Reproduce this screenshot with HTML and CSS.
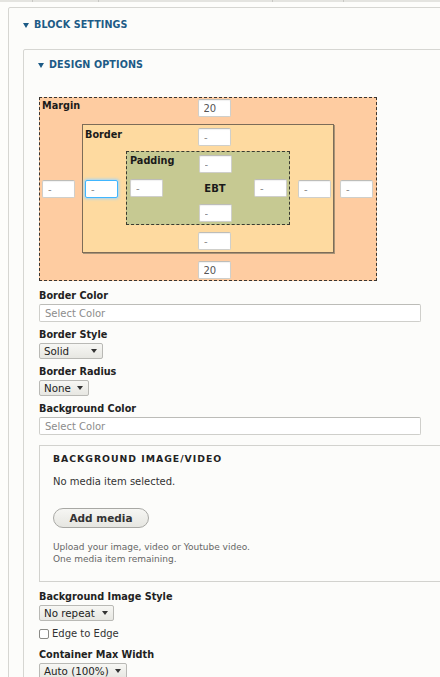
FILE: index.html
```html
<!DOCTYPE html>
<html lang="en">
<head>
<meta charset="utf-8">
<title>Block settings</title>
<link rel="stylesheet" href="styles.css">
</head>
<body>
<div class="topstrip"><span class="ts ts1"></span><span class="ts ts2"></span><span class="ts ts3"></span><span class="ts ts4"></span></div>
<section class="details outer">
  <div class="summary"><span class="tri"></span>BLOCK SETTINGS</div>
  <div class="outer-body">
    <section class="details inner">
      <div class="summary"><span class="tri"></span>DESIGN OPTIONS</div>
      <div class="inner-body">
        <div class="bm bm-margin">
          <div class="bm-label">Margin</div>
          <input class="bm-in bm-top" value="20">
          <input class="bm-in bm-left" value="-">
          <div class="bm bm-border">
            <div class="bm-label">Border</div>
            <input class="bm-in bm-top" value="-">
            <input class="bm-in bm-left focused" value="-">
            <div class="bm bm-padding">
              <div class="bm-label">Padding</div>
              <input class="bm-in bm-top" value="-">
              <input class="bm-in bm-left" value="-">
              <div class="bm-center">EBT</div>
              <input class="bm-in bm-right" value="-">
              <input class="bm-in bm-bottom" value="-">
            </div>
            <input class="bm-in bm-right" value="-">
            <input class="bm-in bm-bottom" value="-">
          </div>
          <input class="bm-in bm-right" value="-">
          <input class="bm-in bm-bottom" value="20">
        </div>

        <div class="form-item first">
          <div class="field-label">Border Color</div>
          <input class="text-input" placeholder="Select Color">
        </div>
        <div class="form-item">
          <div class="field-label">Border Style</div>
          <div class="select w-solid"><span>Solid</span><span class="arrow"></span></div>
        </div>
        <div class="form-item">
          <div class="field-label">Border Radius</div>
          <div class="select w-none"><span>None</span><span class="arrow"></span></div>
        </div>
        <div class="form-item">
          <div class="field-label">Background Color</div>
          <input class="text-input" placeholder="Select Color">
        </div>

        <section class="media-box">
          <div class="media-title">BACKGROUND IMAGE/VIDEO</div>
          <div class="media-empty">No media item selected.</div>
          <div class="button">Add media</div>
          <div class="description">Upload your image, video or Youtube video.<br>One media item remaining.</div>
        </section>

        <div class="form-item after-media">
          <div class="field-label">Background Image Style</div>
          <div class="select w-repeat"><span>No repeat</span><span class="arrow"></span></div>
        </div>
        <div class="form-item check-item">
          <span class="checkbox"></span><span class="check-label">Edge to Edge</span>
        </div>
        <div class="form-item">
          <div class="field-label">Container Max Width</div>
          <div class="select w-auto"><span>Auto (100%)</span><span class="arrow"></span></div>
        </div>
      </div>
    </section>
  </div>
</section>
</body>
</html>
```

FILE: styles.css
```css
html, body {
  margin: 0;
  padding: 0;
  overflow: hidden;
  background: #fdfdfb;
  font-family: "DejaVu Sans", "Noto Sans", sans-serif;
  color: #222;
}

.topstrip {
  height: 2px;
  background: #e4e4e0;
  display: flex;
  margin-bottom: 5px;
}
.ts { width: 1px; height: 2px; background: #c8c8c4; }
.ts1 { margin-left: 32px; }
.ts2 { margin-left: 65px; }
.ts3 { margin-left: 173px; }
.ts4 { margin-left: 70px; }

.details {
  border: 1px solid #d6d6d2;
  border-radius: 2px;
  background: #fcfcfa;
  box-sizing: border-box;
}

.outer {
  margin-left: 8px;
  width: 470px;
}

.summary {
  display: flex;
  align-items: center;
  font-size: 9.6px;
  font-weight: bold;
  line-height: 12px;
  color: #1d5b86;
  letter-spacing: 0.1px;
}
.tri {
  width: 0;
  height: 0;
  border-left: 3.5px solid transparent;
  border-right: 3.5px solid transparent;
  border-top: 5px solid #1d5b86;
  margin-right: 5px;
}

.outer > .summary {
  padding: 11px 14px 8px 14px;
}
.outer-body {
  padding: 10px 0 0 14px;
}

.inner {
  width: 460px;
}
.inner > .summary {
  padding: 9px 14px 0 14px;
}
.inner-body {
  padding: 26px 0 0 15px;
}

/* Box model */
.bm {
  display: grid;
  grid-template-columns: 33px 1fr 33px;
  grid-template-rows: 18px 1fr 18px;
  box-sizing: border-box;
}
.bm-margin {
  width: 338px;
  height: 184px;
  padding: 1px 3px 1px 2px;
  background: #fecca1;
  border: 1px dashed #3a3530;
}
.bm-border {
  grid-row: 2;
  grid-column: 2;
  margin: 7px 6px 8px 7px;
  padding: 3px 2px 2px 2px;
  background: #fedaa0;
  border: 1px solid #7d6c58;
  box-shadow: 1px 1px 0 #a89478;
}
.bm-padding {
  grid-row: 2;
  grid-column: 2;
  grid-template-rows: 17px 1fr 18px;
  margin: 5px 8px 7px 8px;
  padding: 3px 2px 2px 3px;
  background: #c6c992;
  border: 1px dashed #3a3a30;
}

.bm-label {
  grid-row: 1;
  grid-column: 1 / 3;
  justify-self: start;
  align-self: start;
  font-size: 9.7px;
  font-weight: bold;
  line-height: 12px;
  color: #1a1a1a;
  margin-top: 1px;
}
.bm-padding .bm-label { margin-top: 0; }

.bm-in {
  box-sizing: border-box;
  width: 33px;
  height: 18px;
  margin: 0;
  padding: 0 0 0 5px;
  border: 1px solid #cfcfcb;
  border-top-color: #bdbdb9;
  border-radius: 2px;
  background: #fff;
  box-shadow: inset 0 1px 1px rgba(0,0,0,0.06);
  font-family: "DejaVu Sans", sans-serif;
  font-size: 10px;
  color: #8a8a8a;
  outline: none;
}
.bm-in[value="20"] { color: #555; }
.bm-in.focused {
  border-color: #40b6ff;
  box-shadow: 0 0 3px 1px #9fd6ff;
}
.bm-top {
  grid-row: 1;
  grid-column: 2;
  justify-self: center;
  margin-left: 13px;
}
.bm-bottom {
  grid-row: 3;
  grid-column: 2;
  justify-self: center;
  margin-left: 13px;
}
.bm-left {
  grid-row: 2;
  grid-column: 1;
  align-self: center;
}
.bm-right {
  grid-row: 2;
  grid-column: 3;
  align-self: center;
}
.bm-center {
  grid-row: 2;
  grid-column: 2;
  align-self: center;
  text-align: center;
  padding-left: 13px;
  font-size: 10px;
  font-weight: bold;
  color: #1a1a1a;
}

/* Form items */
.form-item { margin-top: 7px; }
.form-item.first { margin-top: 9px; }
.field-label {
  font-size: 9.7px;
  font-weight: bold;
  line-height: 12px;
  color: #222;
  margin-bottom: 2px;
}
.text-input {
  display: block;
  box-sizing: border-box;
  width: 382px;
  height: 18px;
  margin: 0;
  padding: 0 5px;
  border: 1px solid #cfcfcb;
  border-top-color: #bcbcb8;
  border-radius: 2px;
  background: #fff;
  font-family: "DejaVu Sans", sans-serif;
  font-size: 10px;
  color: #333;
  outline: none;
}
.text-input::placeholder { color: #8c8c8c; }

.select {
  display: flex;
  align-items: center;
  box-sizing: border-box;
  height: 16px;
  margin-top: 1px;
  padding: 0 5px 0 4px;
  border: 1px solid #b9b9b5;
  border-radius: 2px;
  background: linear-gradient(#f7f7f4, #e7e7e2);
  font-size: 10.3px;
  line-height: 14px;
  color: #222;
}
.select .arrow {
  margin-left: auto;
  width: 0;
  height: 0;
  border-left: 3px solid transparent;
  border-right: 3px solid transparent;
  border-top: 4px solid #333;
}
.w-solid { width: 64px; }
.w-none { width: 50px; }
.w-repeat { width: 75px; }
.w-auto { width: 88px; }

/* Media box */
.media-box {
  margin-top: 10px;
  box-sizing: border-box;
  height: 137px;
  border: 1px solid #d2d2ce;
  border-right: none;
  padding: 7px 0 0 13px;
}
.media-title {
  font-size: 9.3px;
  font-weight: bold;
  line-height: 12px;
  letter-spacing: 1px;
  color: #222;
}
.media-empty {
  margin-top: 11px;
  font-size: 10px;
  line-height: 12px;
  color: #333;
}
.button {
  margin-top: 20px;
  box-sizing: border-box;
  width: 96px;
  height: 20px;
  border: 1px solid #a8a8a4;
  border-radius: 10px;
  background: linear-gradient(#f6f6f3, #e6e6e1);
  display: flex;
  align-items: center;
  justify-content: center;
  font-size: 10.5px;
  font-weight: bold;
  color: #333;
}
.description {
  margin-top: 13px;
  font-size: 9px;
  line-height: 12px;
  color: #666;
}

.after-media { margin-top: 9px; }

.check-item {
  display: flex;
  align-items: center;
  height: 12px;
  margin-top: 7px;
}
.checkbox {
  box-sizing: border-box;
  width: 10px;
  height: 10px;
  border: 1px solid #8a8a86;
  border-radius: 2px;
  background: #fff;
  margin-right: 3px;
}
.check-label {
  font-size: 10px;
  line-height: 12px;
  color: #333;
}
.check-item + .form-item { margin-top: 9px; }
```
